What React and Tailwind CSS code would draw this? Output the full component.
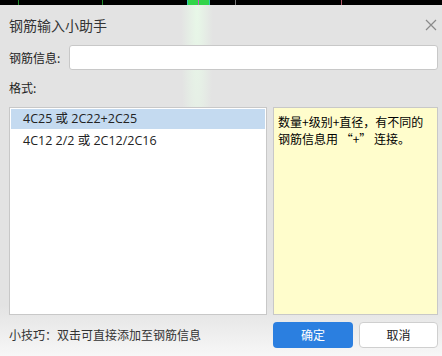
const ROWS = ['4C25 或 2C22+2C25', '4C12 2/2 或 2C12/2C16']

function TopStrip() {
  return (
    <div className="relative h-[5px] bg-black">
      <span className="absolute left-[18px] top-0 h-full w-px bg-[#1f8a2a]" />
      <span className="absolute left-[102px] top-0 h-full w-px bg-[#1f8a2a]" />
      <span className="absolute left-[187px] top-0 h-full w-[23px] bg-[#33d44a]" />
      <span className="absolute left-[187px] top-0 h-full w-px bg-[#2fc6b8]" />
      <span className="absolute left-[198px] top-0 h-full w-px bg-[#d050c8]" />
      <span className="absolute left-[209px] top-0 h-full w-px bg-[#2fc6b8]" />
      <span className="absolute left-[235px] top-0 h-full w-px bg-[#777]" />
      <span className="absolute left-[341px] top-0 h-full w-px bg-[#b05a6a]" />
    </div>
  )
}

export default function App() {
  return (
    <div
      lang="zh-CN"
      className="flex h-[356px] w-[442px] flex-col overflow-hidden text-[#222]"
      style={{ fontFamily: '"Noto Sans CJK SC", "Noto Sans", sans-serif' }}
    >
      <TopStrip />
      <div className="flex flex-1 flex-col bg-[#e3e3e3] bg-[radial-gradient(ellipse_16px_240px_at_197px_0,#e8f8e8,transparent),linear-gradient(to_bottom,transparent_300px,#f7f7f7)] pl-[9px] pr-[4px]">
        <div className="flex h-[40px] items-center justify-between">
          <span className="text-[14px] text-[#333]">钢筋输入小助手</span>
          <svg width="12" height="12" viewBox="0 0 12 12" className="mr-[1px]">
            <path d="M1 1 L11 11 M11 1 L1 11" stroke="#8a8a8a" strokeWidth="1.2" />
          </svg>
        </div>

        <div className="flex items-center">
          <span className="w-[60px] text-[12px]">钢筋信息:</span>
          <input className="h-[25px] flex-1 rounded-[3px] border border-[#c8c8c8] bg-white outline-none" />
        </div>

        <div className="mt-[11px] flex h-[14px] items-center text-[12px]">格式:</div>

        <div className="mt-[12px] flex h-[208px] gap-[6px]">
          <div className="flex w-[258px] flex-col gap-[2px] border border-[#c8c8c8] bg-white p-px">
            {ROWS.map((r, i) => (
              <div
                key={r}
                className={`flex h-[20px] items-center pl-[12px] text-[12.5px] ${i === 0 ? 'bg-[#c4daf0]' : ''}`}
                style={{ fontFamily: '"Open Sans", "Noto Sans CJK SC", sans-serif' }}
              >
                {r}
              </div>
            ))}
          </div>
          <div className="flex-1 border border-[#c8c8c8] bg-[#fffdcc] px-[4px] pt-[5px] text-[12px] leading-[17px] text-black">
            数量+级别+直径，有不同的钢筋信息用 “+” 连接。
          </div>
        </div>

        <div className="mt-[7px] flex items-center">
          <span className="flex-1 text-[12px] text-[#333]">小技巧：双击可直接添加至钢筋信息</span>
          <button className="h-[26px] w-[80px] rounded-[4px] bg-[#2b7fe0] text-[12px] text-white">确定</button>
          <button className="ml-[6px] h-[26px] w-[79px] rounded-[4px] border border-[#cfcfcf] bg-white text-[12px] text-[#222]">
            取消
          </button>
        </div>
      </div>
    </div>
  )
}
